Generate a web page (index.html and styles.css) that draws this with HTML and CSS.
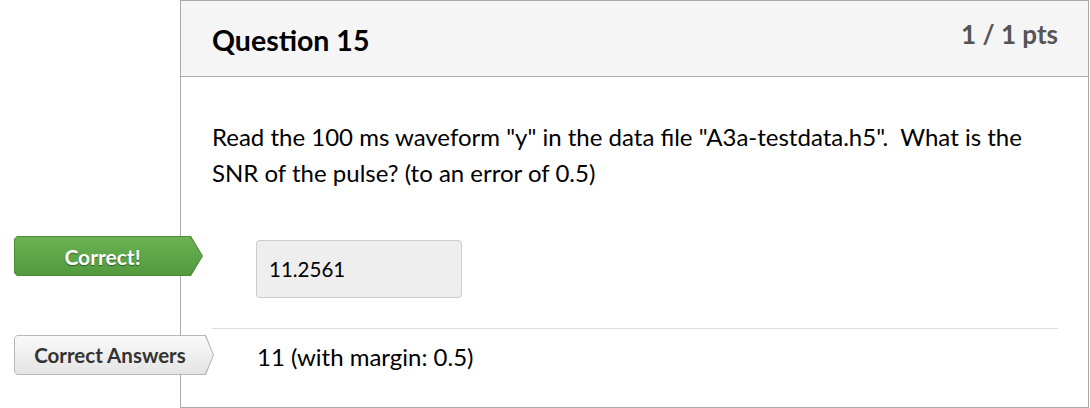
FILE: index.html
```html
<!DOCTYPE html>
<html>
<head>
<meta charset="utf-8">
<link rel="stylesheet" href="styles.css">
</head>
<body>
<div class="page">
  <div class="card">
    <div class="card-header">
      <h2 class="q-title">Question 15</h2>
      <div class="q-pts">1 / 1 pts</div>
    </div>
    <div class="card-body">
      <p class="q-text">Read the 100 ms waveform "y" in the data file "A3a-testdata.h5".&nbsp; What is the SNR of the pulse? (to an error of 0.5)</p>
      <div class="answer-row">
        <div class="badge badge-correct"><div class="badge-inner">Correct!</div></div>
        <div class="answer-box">11.2561</div>
      </div>
      <div class="divider"></div>
      <div class="answer-row answer-row-2">
        <div class="badge badge-answers"><div class="badge-inner">Correct Answers</div></div>
        <div class="answer-text">11 (with margin: 0.5)</div>
      </div>
    </div>
  </div>
</div>
</body>
</html>
```

FILE: styles.css
```css
html, body {
  margin: 0;
  padding: 0;
  background: #fff;
}
body {
  font-family: Lato, "Open Sans", sans-serif;
  color: #2d3b45;
  width: 1090px;
  height: 408px;
  overflow: hidden;
}
.page {
  padding-left: 180px;
  padding-right: 1px;
}
.card {
  border: 1px solid #aaaaaa;
  box-sizing: border-box;
  height: 408px;
}
.card-header {
  background: #f5f5f5;
  border-bottom: 1px solid #aaaaaa;
  height: 75px;
  display: flex;
  justify-content: space-between;
  align-items: flex-start;
  padding: 0 30px 0 31px;
}
.q-title {
  margin: 0;
  padding-top: 21px;
  font-size: 28.5px;
  font-weight: 700;
  color: #000;
  line-height: 36px;
}
.q-pts {
  padding-top: 18px;
  font-size: 26px;
  font-weight: 700;
  color: #555;
  line-height: 30px;
}
.card-body {
  padding: 0 30px 0 31px;
}
.q-text {
  margin: 0;
  padding-top: 42px;
  font-size: 24px;
  line-height: 36px;
  color: #000;
}
.answer-row {
  position: relative;
  display: flex;
  align-items: center;
  margin-top: 49px;
  padding-left: 44px;
}
.answer-box {
  width: 192px;
  height: 56px;
  box-sizing: content-box;
  background: #eeeeee;
  border: 1px solid #cccccc;
  border-radius: 4px;
  padding-left: 12px;
  display: flex;
  align-items: center;
  font-size: 20.5px;
  color: #000;
}
.divider {
  margin-top: 30px;
  height: 1px;
  background: #dddddd;
}
.answer-row-2 {
  margin-top: 7px;
  height: 40px;
  padding-left: 45px;
}
.answer-text {
  font-size: 24px;
  color: #000;
  padding-top: 1px;
}
.badge {
  position: absolute;
  left: -198px;
  top: 50%;
  transform: translateY(-50%);
  padding: 1px;
  box-sizing: border-box;
}
.badge-inner {
  height: 100%;
  display: flex;
  align-items: center;
  justify-content: center;
  font-weight: 700;
  font-size: 21px;
}
.badge-correct {
  width: 189px;
  height: 40px;
  background: #4b8a39;
  clip-path: polygon(0 3px, 3px 0, calc(100% - 12px) 0, 100% 50%, calc(100% - 12px) 100%, 3px 100%, 0 calc(100% - 3px));
  transform: translateY(calc(-50% - 13px));
}
.badge-correct .badge-inner {
  background: linear-gradient(#6bb253, #519a3e);
  color: #fff;
  text-shadow: 0 1px 1px rgba(0,0,0,0.45);
  padding-right: 12px;
  clip-path: polygon(0 2px, 2px 0, calc(100% - 12px) 0, 100% 50%, calc(100% - 12px) 100%, 2px 100%, 0 calc(100% - 2px));
}
.badge-answers {
  width: 200px;
  height: 40px;
  background: #b8b8b8;
  clip-path: polygon(0 3px, 3px 0, calc(100% - 8px) 0, 100% 50%, calc(100% - 8px) 100%, 3px 100%, 0 calc(100% - 3px));
  transform: translateY(calc(-50% - 1px));
}
.badge-answers .badge-inner {
  background: linear-gradient(#fafafa, #e4e4e4);
  color: #333;
  font-size: 20.5px;
  padding-right: 8px;
  clip-path: polygon(0 2px, 2px 0, calc(100% - 8px) 0, 100% 50%, calc(100% - 8px) 100%, 2px 100%, 0 calc(100% - 2px));
}
```
